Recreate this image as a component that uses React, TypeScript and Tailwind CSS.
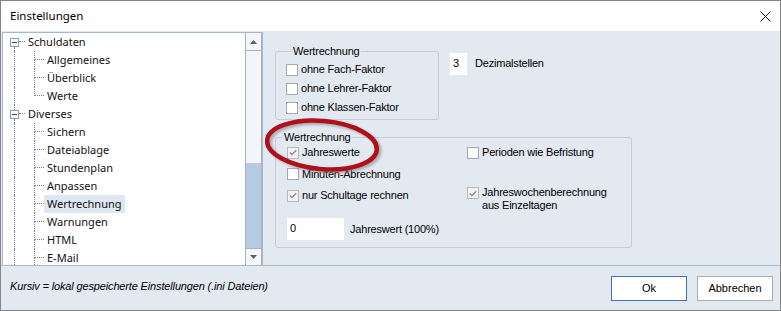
import React from "react";

const Check = ({ checked }: { checked?: boolean }) =>
  checked ? (
    <span className="w-[12px] h-[12px] shrink-0 border border-[#b8b8b8] bg-[#f3f3f3] flex items-center justify-center">
      <svg width="8" height="7" viewBox="0 0 8 7">
        <path d="M0.8 3.4 L3 5.6 L7.2 1.2" stroke="#8e8e8e" strokeWidth="1.4" fill="none" />
      </svg>
    </span>
  ) : (
    <span className="w-[12px] h-[12px] shrink-0 border border-[#a9a9a9] bg-white" />
  );

type Item = { t: string; root?: boolean; first?: boolean; last?: boolean; sel?: boolean };

const items: Item[] = [
  { t: "Schuldaten", root: true, first: true },
  { t: "Allgemeines" },
  { t: "Überblick" },
  { t: "Werte", last: true },
  { t: "Diverses", root: true },
  { t: "Sichern" },
  { t: "Dateiablage" },
  { t: "Stundenplan" },
  { t: "Anpassen" },
  { t: "Wertrechnung", sel: true },
  { t: "Warnungen" },
  { t: "HTML" },
  { t: "E-Mail" },
];

const RootRow = ({ it }: { it: Item }) => (
  <div className="flex h-[18px] shrink-0">
    <div className="w-[7px]" />
    <div className="w-[9px] flex flex-col items-center">
      <div className={it.first ? "flex-1" : "flex-1 border-l border-dotted border-[#808080]"} />
      <div className="w-[9px] h-[9px] border border-[#8f9cb2] bg-white flex items-center justify-center">
        <div className="w-[5px] h-[1px] bg-[#2b4a80]" />
      </div>
      <div className="flex-1 border-l border-dotted border-[#808080]" />
    </div>
    <div className="w-[6px] flex flex-col">
      <div className="h-[9px] border-b border-dotted border-[#808080]" />
    </div>
    <div className="ml-[3px] leading-[18px]">{it.t}</div>
  </div>
);

const ChildRow = ({ it }: { it: Item }) => (
  <div className="flex h-[18px] shrink-0">
    <div className="w-[11px]" />
    <div className="w-[20px] border-l border-dotted border-[#808080]" />
    <div className="w-[10px] flex flex-col">
      <div className="h-[9px] border-l border-b border-dotted border-[#808080]" />
      <div className={it.last ? "flex-1" : "flex-1 border-l border-dotted border-[#808080]"} />
    </div>
    <div className={it.sel ? "px-[3px] leading-[18px] bg-[#dde6f1]" : "px-[3px] leading-[18px]"}>{it.t}</div>
  </div>
);

export default function App() {
  return (
    <div className="w-[781px] h-[311px] border border-[#858585] bg-[#e3e9f1] flex flex-col overflow-hidden text-black">
      {/* title bar */}
      <div className="h-[30px] bg-white flex items-center justify-between pl-[9px] pr-[9px] shrink-0 font-['Noto_Sans',sans-serif] text-[11.5px]">
        <span>Einstellungen</span>
        <svg width="11" height="11" viewBox="0 0 11 11">
          <path d="M0.5 0.5 L10.5 10.5 M10.5 0.5 L0.5 10.5" stroke="#111" strokeWidth="1" fill="none" />
        </svg>
      </div>

      {/* body */}
      <div className="h-[234px] flex pt-[1px] pl-[1px] shrink-0">
        {/* tree */}
        <div className="w-[261px] h-[233px] flex border-l border-t border-r border-[#a4b7d2] bg-white">
          <div className="w-[242px] h-full overflow-hidden flex flex-col font-['Noto_Sans',sans-serif] text-[11px] text-[#111]">
            {items.map((it) => (it.root ? <RootRow key={it.t} it={it} /> : <ChildRow key={it.t} it={it} />))}
          </div>
          <div className="w-[17px] h-full flex flex-col border-l border-r border-[#b1b1b1] bg-[#f3f5fa]">
            <div className="h-[18px] border-b border-[#b1b1b1] bg-[#f5f6f9] flex items-center justify-center">
              <svg width="7" height="4" viewBox="0 0 7 4">
                <path d="M0 4 L3.5 0 L7 4 Z" fill="#606060" />
              </svg>
            </div>
            <div className="flex-1" />
            <div className="h-[85px] bg-[#b7cae5]" />
            <div className="h-[17px] border-t border-[#b1b1b1] bg-[#f5f6f9] flex items-center justify-center">
              <svg width="7" height="4" viewBox="0 0 7 4">
                <path d="M0 0 L7 0 L3.5 4 Z" fill="#606060" />
              </svg>
            </div>
          </div>
        </div>

        {/* right panel */}
        <div className="relative flex-1 pl-[12px] pt-[13px] font-['Liberation_Sans',Arial,sans-serif] text-[11px] tracking-[-0.2px]">
          <div className="flex items-start">
            <fieldset className="w-[164px] border border-[#c8cdd5] rounded-[3px] pl-[10px] pt-[2px] pb-[2px]">
              <legend className="ml-[6px] px-[1px] leading-[13px]">Wertrechnung</legend>
              {["ohne Fach-Faktor", "ohne Lehrer-Faktor", "ohne Klassen-Faktor"].map((t) => (
                <div key={t} className="h-[19px] flex items-center gap-[3px]">
                  <Check />
                  <span>{t}</span>
                </div>
              ))}
            </fieldset>
            <div className="ml-[11px] mt-[8px] w-[17px] h-[22px] bg-white pl-[3px] leading-[20px]">3</div>
            <div className="ml-[8px] mt-[8px] leading-[20px]">Dezimalstellen</div>
          </div>

          <fieldset className="mt-[11px] w-[357px] border border-[#c8cdd5] rounded-[3px] pb-[7px]">
            <legend className="ml-[7px] px-[1px] leading-[13px]">Wertrechnung</legend>
            <div className="grid grid-cols-[191px_1fr] -mt-[2px]">
              <div className="pl-[11px] flex flex-col">
                <div className="h-[21px] flex items-center gap-[3px]">
                  <Check checked />
                  <span>Jahreswerte</span>
                </div>
                <div className="h-[22px] flex items-center gap-[3px]">
                  <Check />
                  <span>Minuten-Abrechnung</span>
                </div>
                <div className="h-[21px] flex items-center gap-[3px]">
                  <Check checked />
                  <span>nur Schultage rechnen</span>
                </div>
                <div className="mt-[12px] flex items-center">
                  <div className="w-[57px] h-[22px] bg-white pl-[3px] leading-[20px]">0</div>
                  <span className="ml-[6px]">Jahreswert (100%)</span>
                </div>
              </div>
              <div className="flex flex-col">
                <div className="h-[21px] flex items-center gap-[3px]">
                  <Check />
                  <span>Perioden wie Befristung</span>
                </div>
                <div className="mt-[23px] flex items-start gap-[3px]">
                  <div className="mt-[1px]">
                    <Check checked />
                  </div>
                  <span className="leading-[13px]">
                    Jahreswochenberechnung
                    <br />
                    aus Einzeltagen
                  </span>
                </div>
              </div>
            </div>
          </fieldset>

          {/* red highlight ellipse */}
          <svg className="absolute left-0 top-[78px] pointer-events-none" width="130" height="70" viewBox="0 0 130 70">
            <defs>
              <filter id="sh" x="-20%" y="-20%" width="140%" height="140%">
                <feGaussianBlur stdDeviation="1.2" />
              </filter>
            </defs>
            <ellipse cx="61.5" cy="37" rx="55" ry="24" transform="rotate(5 61.5 37)" fill="none" stroke="#7d7d7d" strokeOpacity="0.55" strokeWidth="4.5" filter="url(#sh)" />
            <ellipse cx="59" cy="35" rx="55" ry="24" transform="rotate(5 59 35)" fill="none" stroke="#b0101a" strokeWidth="4.5" />
          </svg>
        </div>
      </div>

      {/* footer */}
      <div className="h-[45px] border-t border-[#a8bbd5] flex items-center justify-between pl-[9px] pr-[7px] shrink-0 font-['Liberation_Sans',Arial,sans-serif] text-[11px]">
        <span className="italic mb-[4px] tracking-[-0.15px]">Kursiv = lokal gespeicherte Einstellungen (.ini Dateien)</span>
        <div className="flex gap-[10px]">
          <button className="w-[76px] h-[25px] border border-[#3e76b3] bg-white">Ok</button>
          <button className="w-[76px] h-[25px] border border-[#adadad] bg-white">Abbrechen</button>
        </div>
      </div>
    </div>
  );
}
